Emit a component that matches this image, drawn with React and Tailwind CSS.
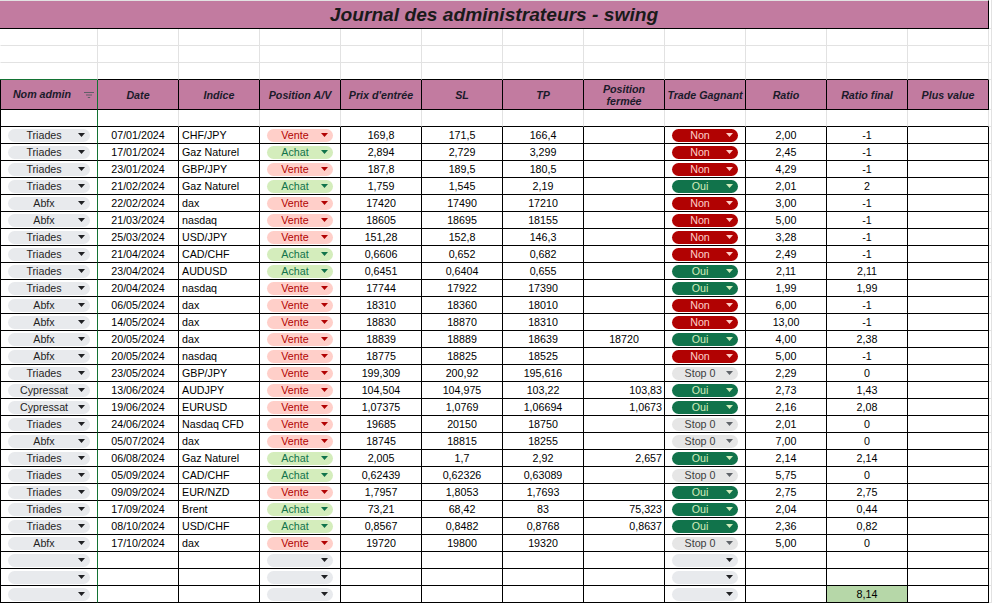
import React from "react";

// chip colours taken from the sheet's dropdown styles
const CHIP = {
  admin: { bg: "bg-[#e8eaed]", text: "text-[#1f1f1f]", arrow: "#202124" },
  Vente: { bg: "bg-[#ffcfc9]", text: "text-[#b10202]", arrow: "#b10202" },
  Achat: { bg: "bg-[#d4edbc]", text: "text-[#11734b]", arrow: "#11734b" },
  Non: { bg: "bg-[#b10202]", text: "text-[#ffcfc9]", arrow: "#ffcfc9" },
  Oui: { bg: "bg-[#11734b]", text: "text-[#d4edbc]", arrow: "#d4edbc" },
  "Stop 0": { bg: "bg-[#e6e6e6]", text: "text-[#3d3d3d]", arrow: "#5f6368" },
};

const rows = [
  ["Triades", "07/01/2024", "CHF/JPY", "Vente", "169,8", "171,5", "166,4", "", "Non", "2,00", "-1"],
  ["Triades", "17/01/2024", "Gaz Naturel", "Achat", "2,894", "2,729", "3,299", "", "Non", "2,45", "-1"],
  ["Triades", "23/01/2024", "GBP/JPY", "Vente", "187,8", "189,5", "180,5", "", "Non", "4,29", "-1"],
  ["Triades", "21/02/2024", "Gaz Naturel", "Achat", "1,759", "1,545", "2,19", "", "Oui", "2,01", "2"],
  ["Abfx", "22/02/2024", "dax", "Vente", "17420", "17490", "17210", "", "Non", "3,00", "-1"],
  ["Abfx", "21/03/2024", "nasdaq", "Vente", "18605", "18695", "18155", "", "Non", "5,00", "-1"],
  ["Triades", "25/03/2024", "USD/JPY", "Vente", "151,28", "152,8", "146,3", "", "Non", "3,28", "-1"],
  ["Triades", "21/04/2024", "CAD/CHF", "Achat", "0,6606", "0,652", "0,682", "", "Non", "2,49", "-1"],
  ["Triades", "23/04/2024", "AUDUSD", "Achat", "0,6451", "0,6404", "0,655", "", "Oui", "2,11", "2,11"],
  ["Triades", "20/04/2024", "nasdaq", "Vente", "17744", "17922", "17390", "", "Oui", "1,99", "1,99"],
  ["Abfx", "06/05/2024", "dax", "Vente", "18310", "18360", "18010", "", "Non", "6,00", "-1"],
  ["Abfx", "14/05/2024", "dax", "Vente", "18830", "18870", "18310", "", "Non", "13,00", "-1"],
  ["Abfx", "20/05/2024", "dax", "Vente", "18839", "18889", "18639", "18720", "Oui", "4,00", "2,38", true],
  ["Abfx", "20/05/2024", "nasdaq", "Vente", "18775", "18825", "18525", "", "Non", "5,00", "-1"],
  ["Triades", "23/05/2024", "GBP/JPY", "Vente", "199,309", "200,92", "195,616", "", "Stop 0", "2,29", "0"],
  ["Cypressat", "13/06/2024", "AUDJPY", "Vente", "104,504", "104,975", "103,22", "103,83", "Oui", "2,73", "1,43"],
  ["Cypressat", "19/06/2024", "EURUSD", "Vente", "1,07375", "1,0769", "1,06694", "1,0673", "Oui", "2,16", "2,08"],
  ["Triades", "24/06/2024", "Nasdaq CFD", "Vente", "19685", "20150", "18750", "", "Stop 0", "2,01", "0"],
  ["Abfx", "05/07/2024", "dax", "Vente", "18745", "18815", "18255", "", "Stop 0", "7,00", "0"],
  ["Triades", "06/08/2024", "Gaz Naturel", "Achat", "2,005", "1,7", "2,92", "2,657", "Oui", "2,14", "2,14"],
  ["Triades", "05/09/2024", "CAD/CHF", "Achat", "0,62439", "0,62326", "0,63089", "", "Stop 0", "5,75", "0"],
  ["Triades", "09/09/2024", "EUR/NZD", "Vente", "1,7957", "1,8053", "1,7693", "", "Oui", "2,75", "2,75"],
  ["Triades", "17/09/2024", "Brent", "Achat", "73,21", "68,42", "83", "75,323", "Oui", "2,04", "0,44"],
  ["Triades", "08/10/2024", "USD/CHF", "Achat", "0,8567", "0,8482", "0,8768", "0,8637", "Oui", "2,36", "0,82"],
  ["Abfx", "17/10/2024", "dax", "Vente", "19720", "19800", "19320", "", "Stop 0", "5,00", "0"],
];

const headers = ["Date", "Indice", "Position A/V", "Prix d'entrée", "SL", "TP", null, "Trade Gagnant", "Ratio", "Ratio final", "Plus value"];

function Arrow({ color }) {
  return (
    <svg width="7" height="4" viewBox="0 0 7 4" className="shrink-0">
      <path d="M0 0h7L3.5 4z" fill={color} />
    </svg>
  );
}

function Chip({ value, kind, width }) {
  const c = CHIP[kind] || CHIP.admin;
  return (
    <div className={`${width} h-[13px] rounded-full flex items-center pl-1 pr-[5px] gap-[2px] ${c.bg} ${c.text}`}>
      <span className="flex-1 text-center leading-none">{value}</span>
      <Arrow color={c.arrow} />
    </div>
  );
}

function FirstCell({ children, bottom = "border-b-black", className = "" }) {
  return (
    <div className={`border-l border-l-black border-r border-r-[#137333] border-b ${bottom} flex items-center ${className}`}>
      {children}
    </div>
  );
}

function BlankRow({ line }) {
  return (
    <div className="grid grid-cols-[98px_repeat(11,81px)_3px] h-[17px]">
      {Array.from({ length: 12 }).map((_, i) => (
        <div
          key={i}
          className={`border-r border-r-[#e2e2e2] border-b ${line} ${i === 0 ? "border-l border-l-transparent" : ""}`}
        />
      ))}
      <div className="border-r border-r-[#e2e2e2] border-b border-b-[#e2e2e2]" />
    </div>
  );
}

function DataRow({ r, empty, last }) {
  const [admin, date, indice, pos, prix, sl, tp, ferme, trade, ratio, final, centerFerme] = r || [];
  const cell = "border-r border-r-black border-b border-b-black flex items-center";
  return (
    <div className="grid grid-cols-[98px_repeat(11,81px)_3px] h-[17px]">
      <FirstCell className="pl-[7px]">
        <Chip value={admin} kind="admin" width="w-[82px]" />
      </FirstCell>
      <div className={`${cell} justify-center`}>{date}</div>
      <div className={`${cell} pl-[3px]`}>{indice}</div>
      <div className={`${cell} pl-[7px]`}>
        <Chip value={pos} kind={empty ? "admin" : pos} width="w-[66px]" />
      </div>
      <div className={`${cell} justify-center`}>{prix}</div>
      <div className={`${cell} justify-center`}>{sl}</div>
      <div className={`${cell} justify-center`}>{tp}</div>
      <div className={`${cell} ${centerFerme ? "justify-center" : "justify-end pr-[2px]"}`}>{ferme}</div>
      <div className={`${cell} pl-[7px]`}>
        <Chip value={trade} kind={empty ? "admin" : trade} width="w-[66px]" />
      </div>
      <div className={`${cell} justify-center`}>{ratio}</div>
      <div className={`${cell} justify-center ${last ? "bg-[#b6d7a8]" : ""}`}>{last ? "8,14" : final}</div>
      <div className={cell} />
      <div className="border-r border-r-[#e2e2e2] border-b border-b-[#e2e2e2]" />
    </div>
  );
}

export default function App() {
  return (
    <div className="w-[992px] h-[604px] overflow-hidden bg-white text-black text-[10.7px] font-['Liberation_Sans',Arial,sans-serif]">
      {/* TITLE */}
      <div className="grid grid-cols-[989px_3px] h-[29px]">
        <div className="bg-[#c27ba0] border-t border-t-[#e2e2e2] border-b border-b-black border-r border-r-black flex items-center justify-center">
          <span className="text-[19.2px] font-bold italic text-[#1a1a1a] leading-none">Journal des administrateurs - swing</span>
        </div>
        <div className="border-r border-r-[#e2e2e2] border-b border-b-[#e2e2e2]" />
      </div>

      <BlankRow line="border-b-[#e2e2e2]" />
      <BlankRow line="border-b-[#e2e2e2]" />
      <div className="grid grid-cols-[98px_repeat(11,81px)_3px] h-[17px]">
        {Array.from({ length: 12 }).map((_, i) => (
          <div
            key={i}
            className={`border-r border-r-[#e2e2e2] border-b ${i === 0 ? "border-b-[#137333]" : "border-b-black"}`}
          />
        ))}
        <div className="border-r border-r-[#e2e2e2] border-b border-b-[#e2e2e2]" />
      </div>

      {/* HEADER */}
      <div className="grid grid-cols-[98px_repeat(11,81px)_3px] h-[30px] font-bold italic text-[#1a1a2a]">
        <FirstCell className="bg-[#c27ba0] relative justify-center pr-[14px]">
          <span>Nom admin</span>
          <svg width="10" height="6" viewBox="0 0 10 6" className="absolute right-[3px] top-[12px]">
            <path d="M0 0.5h10M2 3h6M3.8 5.5h2.4" stroke="#5f5f66" strokeWidth="1" />
          </svg>
        </FirstCell>
        {headers.map((h, i) => (
          <div
            key={i}
            className="bg-[#c27ba0] border-r border-r-black border-b border-b-black flex items-center justify-center text-center leading-[12px]"
          >
            {h === null ? (
              <span>
                Position
                <br />
                fermée
              </span>
            ) : (
              h
            )}
          </div>
        ))}
        <div className="border-r border-r-[#e2e2e2] border-b border-b-[#e2e2e2]" />
      </div>

      {/* BLANK UNDER HEADER */}
      <div className="grid grid-cols-[98px_repeat(11,81px)_3px] h-[17px]">
        <FirstCell />
        {Array.from({ length: 11 }).map((_, i) => (
          <div key={i} className="border-r border-r-[#e2e2e2] border-b border-b-black" />
        ))}
        <div className="border-r border-r-[#e2e2e2] border-b border-b-[#e2e2e2]" />
      </div>

      {/* DATA */}
      {rows.map((r, i) => (
        <DataRow key={i} r={r} />
      ))}
      <DataRow empty />
      <DataRow empty />
      <DataRow empty last />
    </div>
  );
}
